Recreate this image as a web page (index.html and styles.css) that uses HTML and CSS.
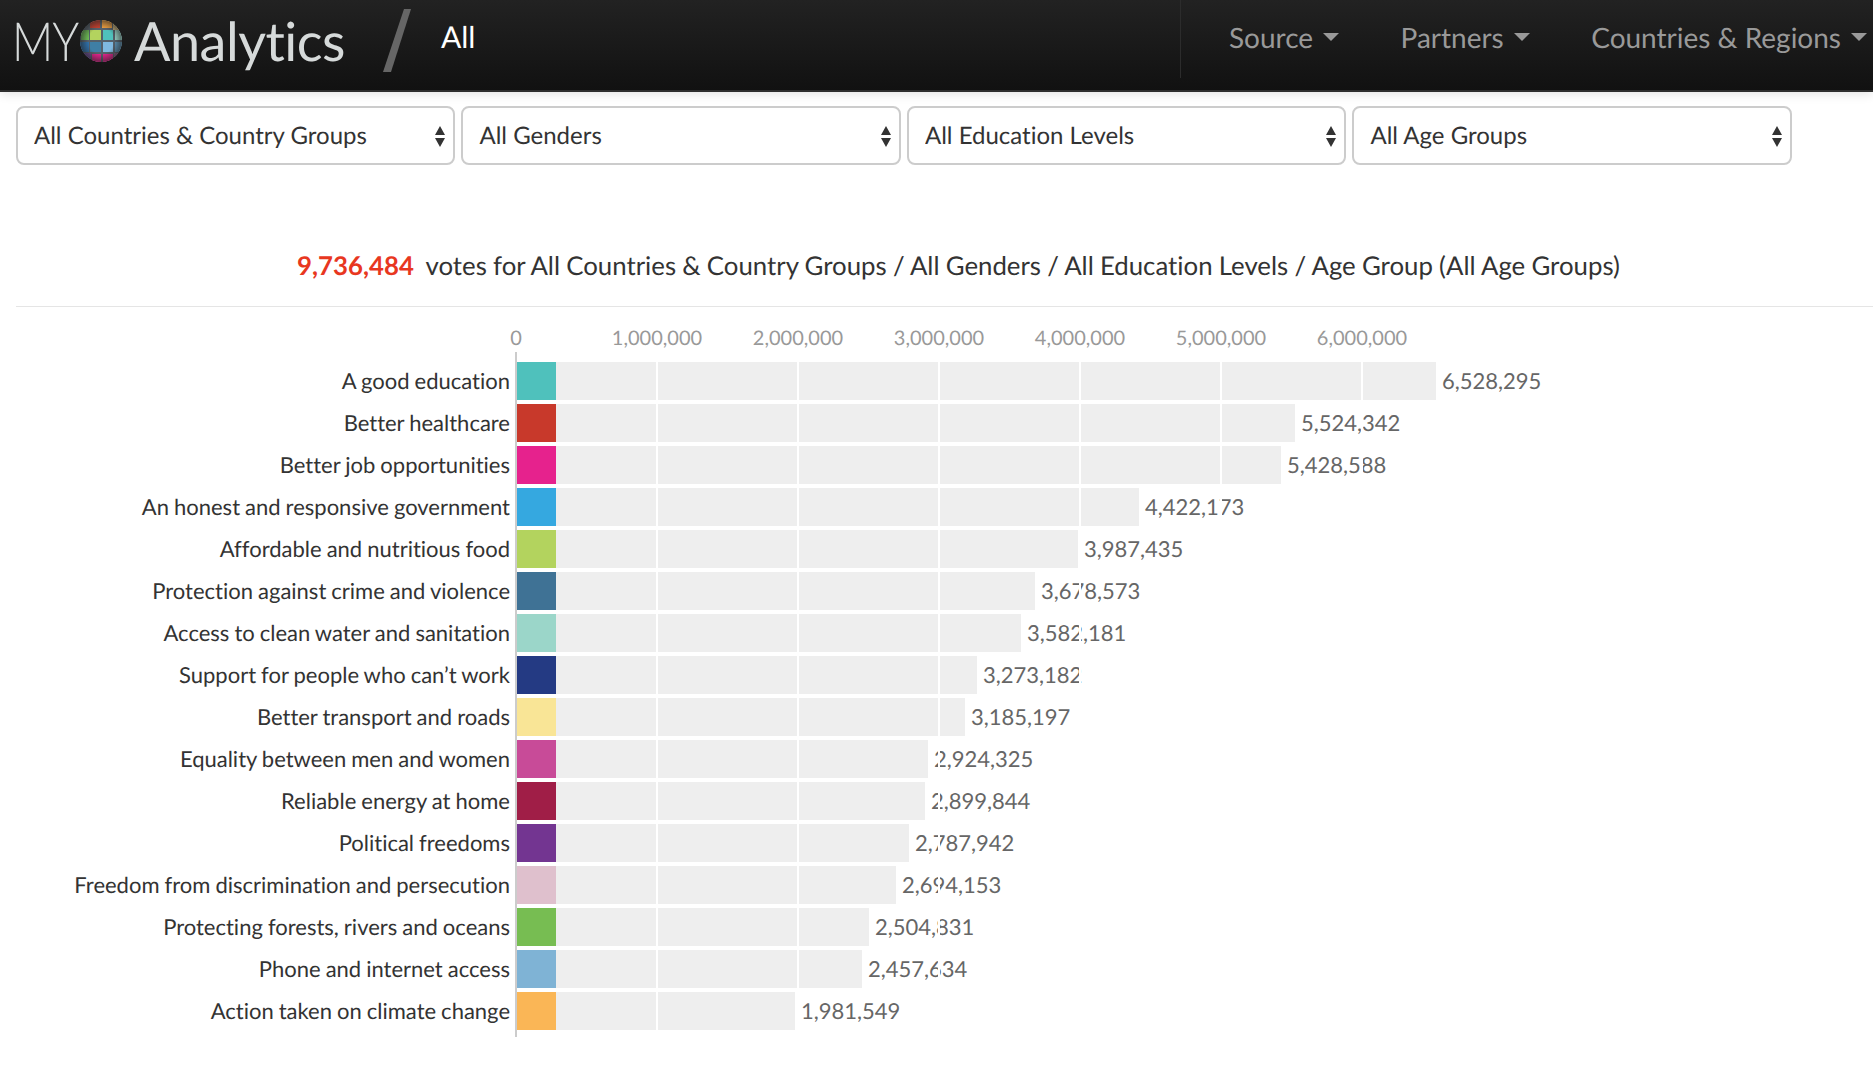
FILE: index.html
```html
<!DOCTYPE html>
<html lang="en">
<head>
<meta charset="utf-8">
<title>MY Analytics</title>
<link rel="stylesheet" href="styles.css">
</head>
<body>
<header class="navbar">
  <a class="brand">
    <span class="brand-my">MY</span>
    <svg class="globe" viewBox="0 0 44 44" aria-hidden="true">
      <defs>
        <clipPath id="ball"><circle cx="22" cy="22" r="21"/></clipPath>
        <radialGradient id="shade"><stop offset=".6" stop-color="#222" stop-opacity="0"/><stop offset="1" stop-color="#222" stop-opacity=".6"/></radialGradient>
      </defs>
      <g clip-path="url(#ball)">
        <rect width="44" height="44" fill="#55606a"/>
        <rect x="11" y="1" width="10" height="8" fill="#c8402f"/>
        <rect x="23" y="1" width="10" height="8" fill="#f0a040"/>
        <rect x="34" y="3" width="8" height="8" fill="#c9b27a"/>
        <rect x="2" y="11" width="8" height="10" fill="#6cbb55"/>
        <rect x="11" y="11" width="11" height="10" fill="#b3d35e"/>
        <rect x="24" y="11" width="10" height="10" fill="#4fc1bc"/>
        <rect x="36" y="11" width="8" height="10" fill="#9bd6c9"/>
        <rect x="1" y="23" width="9" height="10" fill="#2f6fa8"/>
        <rect x="11" y="23" width="11" height="10" fill="#3f7fa5"/>
        <rect x="24" y="23" width="10" height="10" fill="#7fb9e0"/>
        <rect x="36" y="23" width="8" height="10" fill="#5a8fb0"/>
        <rect x="3" y="34" width="9" height="8" fill="#6a4a90"/>
        <rect x="13" y="35" width="9" height="9" fill="#e6228d"/>
        <rect x="24" y="35" width="10" height="9" fill="#e6228d"/>
        <rect x="35" y="34" width="7" height="7" fill="#8a5a80"/>
        <circle cx="22" cy="22" r="21" fill="url(#shade)"/>
      </g>
    </svg>
    <span class="brand-name">Analytics</span>
  </a>
  <svg class="slash" viewBox="0 0 28 63" aria-hidden="true"><polygon points="21,0 28,0 8,63 0,63" fill="#666"/></svg>
  <span class="crumb">All</span>
  <nav class="nav-menu">
    <a class="nav-item">Source<i class="caret"></i></a>
    <a class="nav-item">Partners<i class="caret"></i></a>
    <a class="nav-item">Countries &amp; Regions<i class="caret"></i></a>
  </nav>
</header>

<section class="filters">
  <div class="select-wrap"><select class="select"><option>All Countries &amp; Country Groups</option></select><svg class="updown" viewBox="0 0 12 22" aria-hidden="true"><path d="M6 0 L11 9 H1 Z M1 12 H11 L6 21 Z" fill="#333"/></svg></div>
  <div class="select-wrap"><select class="select"><option>All Genders</option></select><svg class="updown" viewBox="0 0 12 22" aria-hidden="true"><path d="M6 0 L11 9 H1 Z M1 12 H11 L6 21 Z" fill="#333"/></svg></div>
  <div class="select-wrap"><select class="select"><option>All Education Levels</option></select><svg class="updown" viewBox="0 0 12 22" aria-hidden="true"><path d="M6 0 L11 9 H1 Z M1 12 H11 L6 21 Z" fill="#333"/></svg></div>
  <div class="select-wrap"><select class="select"><option>All Age Groups</option></select><svg class="updown" viewBox="0 0 12 22" aria-hidden="true"><path d="M6 0 L11 9 H1 Z M1 12 H11 L6 21 Z" fill="#333"/></svg></div>
</section>

<h2 class="headline"><strong class="count">9,736,484</strong> votes for All Countries &amp; Country Groups / All Genders / All Education Levels / Age Group (All Age Groups)</h2>

<section class="chart">
  <div class="ticks">
    <span class="tick">0</span><span class="tick">1,000,000</span><span class="tick">2,000,000</span><span class="tick">3,000,000</span><span class="tick">4,000,000</span><span class="tick">5,000,000</span><span class="tick">6,000,000</span>
  </div>
  <div class="plot">
    <div class="labels">
      <div class="label">A good education</div>
      <div class="label">Better healthcare</div>
      <div class="label">Better job opportunities</div>
      <div class="label">An honest and responsive government</div>
      <div class="label">Affordable and nutritious food</div>
      <div class="label">Protection against crime and violence</div>
      <div class="label">Access to clean water and sanitation</div>
      <div class="label">Support for people who can’t work</div>
      <div class="label">Better transport and roads</div>
      <div class="label">Equality between men and women</div>
      <div class="label">Reliable energy at home</div>
      <div class="label">Political freedoms</div>
      <div class="label">Freedom from discrimination and persecution</div>
      <div class="label">Protecting forests, rivers and oceans</div>
      <div class="label">Phone and internet access</div>
      <div class="label">Action taken on climate change</div>
    </div>
    <div class="bars">
      <div class="row"><div class="bar" style="width:919px"><i class="chip" style="background:#4fc1bc"></i></div><span class="value">6,528,295</span></div>
      <div class="row"><div class="bar" style="width:778px"><i class="chip" style="background:#c8392b"></i></div><span class="value">5,524,342</span></div>
      <div class="row"><div class="bar" style="width:764px"><i class="chip" style="background:#e6228d"></i></div><span class="value">5,428,588</span></div>
      <div class="row"><div class="bar" style="width:622px"><i class="chip" style="background:#35a8e0"></i></div><span class="value">4,422,173</span></div>
      <div class="row"><div class="bar" style="width:561px"><i class="chip" style="background:#b3d35e"></i></div><span class="value">3,987,435</span></div>
      <div class="row"><div class="bar" style="width:518px"><i class="chip" style="background:#3f7295"></i></div><span class="value">3,678,573</span></div>
      <div class="row"><div class="bar" style="width:504px"><i class="chip" style="background:#9bd6c9"></i></div><span class="value">3,582,181</span></div>
      <div class="row"><div class="bar" style="width:460px"><i class="chip" style="background:#243a83"></i></div><span class="value">3,273,182</span></div>
      <div class="row"><div class="bar" style="width:448px"><i class="chip" style="background:#f9e596"></i></div><span class="value">3,185,197</span></div>
      <div class="row"><div class="bar" style="width:411px"><i class="chip" style="background:#c84b98"></i></div><span class="value">2,924,325</span></div>
      <div class="row"><div class="bar" style="width:408px"><i class="chip" style="background:#a01e47"></i></div><span class="value">2,899,844</span></div>
      <div class="row"><div class="bar" style="width:392px"><i class="chip" style="background:#733591"></i></div><span class="value">2,787,942</span></div>
      <div class="row"><div class="bar" style="width:379px"><i class="chip" style="background:#dfc0cd"></i></div><span class="value">2,694,153</span></div>
      <div class="row"><div class="bar" style="width:352px"><i class="chip" style="background:#77bd52"></i></div><span class="value">2,504,831</span></div>
      <div class="row"><div class="bar" style="width:345px"><i class="chip" style="background:#7fb3d5"></i></div><span class="value">2,457,634</span></div>
      <div class="row"><div class="bar" style="width:278px"><i class="chip" style="background:#fab656"></i></div><span class="value">1,981,549</span></div>
      <i class="gridline" style="left:139px"></i>
      <i class="gridline" style="left:280px"></i>
      <i class="gridline" style="left:421px"></i>
      <i class="gridline" style="left:562px"></i>
      <i class="gridline" style="left:703px"></i>
      <i class="gridline" style="left:844px"></i>
    </div>
  </div>
</section>
</body>
</html>
```
FILE: styles.css
```css
* { box-sizing: border-box; }
html, body { margin: 0; padding: 0; }
body {
  background: #fff;
  color: #333;
  font-family: Lato, "Open Sans", sans-serif;
  font-variant-ligatures: none;
  text-rendering: geometricPrecision;
  overflow: hidden;
  height: 1076px;
}
.navbar {
  height: 92px;
  display: flex;
  align-items: center;
  background: linear-gradient(#222, #111);
  border-bottom: 2px solid #2d2d2d;
  box-shadow: 0 2px 10px rgba(0,0,0,.12);
  padding: 0 0 8px 12px;
  white-space: nowrap;
}
.brand { display: flex; align-items: center; color: #d6dada; filter: blur(.6px); margin-top: -1px; }
.brand-my {
  display: block;
  width: 67px;
  font-size: 54px;
  font-weight: 300;
  line-height: 1;
  letter-spacing: -1px;
  transform: scaleX(.84);
  transform-origin: left center;
}
.globe { width: 44px; height: 44px; margin-top: 1px; }
.brand-name { font-size: 54px; font-weight: 400; line-height: 1; margin-left: 11px; letter-spacing: -.5px; }
.slash { width: 28px; height: 63px; margin-left: 38px; margin-top: -1px; filter: blur(.5px); }
.crumb { color: #fff; font-size: 30px; margin-left: 30px; margin-top: -8px; }
.nav-menu {
  margin-left: auto;
  height: 78px;
  align-self: flex-start;
  display: flex;
  align-items: center;
  border-left: 1px solid #2c2c2c;
  padding: 0 6px 4px 48px;
  gap: 61.5px;
}
.nav-item { color: #999; font-size: 28px; display: flex; align-items: center; }
.caret {
  width: 0; height: 0;
  margin-left: 10px;
  border-left: 8px solid transparent;
  border-right: 8px solid transparent;
  border-top: 8px solid #999;
}
.filters {
  display: flex;
  gap: 6.3px;
  padding: 14px 0 0 16px;
}
.select-wrap { position: relative; width: 439.2px; height: 59px; }
.select {
  appearance: none;
  -webkit-appearance: none;
  width: 100%;
  height: 100%;
  background: #fff;
  border: 2px solid #ccc;
  border-radius: 8px;
  padding: 0 40px 0 16px;
  font: 400 24px Lato, sans-serif;
  font-variant-ligatures: none;
  text-rendering: geometricPrecision;
  color: #333;
}
.updown { position: absolute; right: 9px; top: 20px; width: 12px; height: 22px; }
.headline {
  margin: 0 0 0 16px;
  height: 142px;
  padding: 83px 0 0 28px;
  border-bottom: 1px solid #e5e5e5;
  text-align: center;
  font-size: 25.8px;
  font-weight: 400;
  word-spacing: -.4px;
  line-height: 36px;
  color: #333;
  white-space: nowrap;
}
.count { color: #e8371f; font-weight: 700; margin-right: 6px; }
.ticks {
  display: flex;
  margin-left: 445px;
  padding-top: 18px;
  height: 45px;
}
.tick { width: 142px; flex: none; text-align: center; color: #999; font-size: 20px; line-height: 26px; margin-right: -1px; }
.plot { display: flex; }
.labels { width: 515px; padding-top: 10px; padding-right: 5px; flex: none; display: flex; flex-direction: column; gap: 4px; }
.label { height: 38px; line-height: 38px; text-align: right; font-size: 22px; word-spacing: -.6px; color: #333; white-space: nowrap; }
.bars {
  position: relative;
  border-left: 2px solid #ccc;
  padding: 10px 0 7px;
  display: flex;
  flex-direction: column;
  gap: 4px;
  flex: 1;
}
.row { display: flex; align-items: center; height: 38px; }
.bar { height: 38px; background: #eee; flex: none; }
.chip { display: block; width: 39px; height: 38px; }
.value { margin-left: 6px; font-size: 22px; line-height: 38px; color: #666; }
.gridline { position: absolute; top: 10px; bottom: 7px; width: 2px; background: #fff; }
```
